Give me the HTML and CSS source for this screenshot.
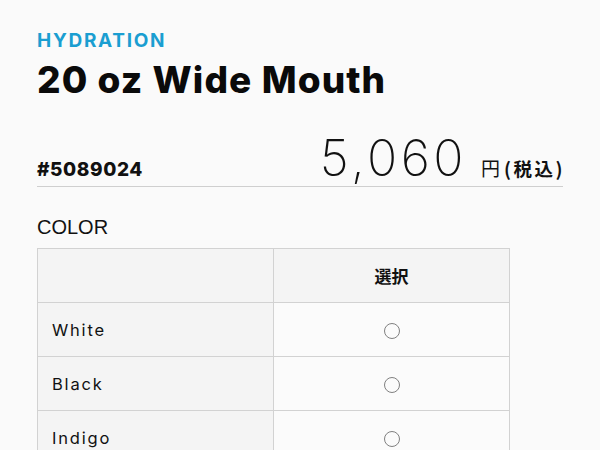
FILE: index.html
```html
<!DOCTYPE html>
<html lang="ja">
<head>
<meta charset="utf-8">
<link rel="stylesheet" href="styles.css">
</head>
<body>
<main class="product">
  <p class="category">HYDRATION</p>
  <h1 class="title">20 oz Wide Mouth</h1>
  <div class="price-row">
    <span class="sku">#5089024</span>
    <span class="price"><span class="amount">5,060</span><span class="yen">円</span><span class="tax">(税込)</span></span>
  </div>
  <h2 class="section">COLOR</h2>
  <table class="options">
    <colgroup><col class="col-label"><col class="col-choice"></colgroup>
    <thead>
      <tr><th class="label-cell"></th><th class="choice-head">選択</th></tr>
    </thead>
    <tbody>
      <tr><td class="label-cell">White</td><td class="choice"><span class="radio"></span></td></tr>
      <tr><td class="label-cell">Black</td><td class="choice"><span class="radio"></span></td></tr>
      <tr><td class="label-cell">Indigo</td><td class="choice"><span class="radio"></span></td></tr>
    </tbody>
  </table>
</main>
</body>
</html>
```
FILE: styles.css
```css
html, body {
  margin: 0;
  padding: 0;
  background: #fafafa;
}
body {
  font-family: "Inter", "Noto Sans CJK JP", sans-serif;
  color: #111;
}
.product {
  padding: 30px 37px 0 37px;
}
.category {
  margin: 0;
  font-size: 19px;
  font-weight: 700;
  letter-spacing: 1.7px;
  color: #1a9ed1;
  line-height: 22px;
}
.title {
  margin: 6px 0 0 0;
  font-size: 37px;
  font-weight: 800;
  letter-spacing: 1.1px;
  line-height: 44px;
  color: #0a0a0a;
}
.price-row {
  display: flex;
  justify-content: space-between;
  align-items: baseline;
  border-bottom: 1px solid #cfcfcf;
  margin-top: 36px;
  padding-bottom: 5px;
}
.sku {
  font-size: 19px;
  font-weight: 800;
  letter-spacing: 0.6px;
}
.price {
  white-space: nowrap;
  flex-shrink: 0;
  margin-right: 0;
}
.amount {
  font-size: 50px;
  font-weight: 200;
  letter-spacing: 3.5px;
  line-height: 40px;
  margin-right: 14px;
}
.yen {
  font-size: 19px;
  font-weight: 400;
  font-family: "Noto Sans CJK JP", sans-serif;
  margin-right: 4px;
}
.tax {
  font-size: 18.5px;
  font-weight: 700;
  font-family: "Noto Sans CJK JP", sans-serif;
  letter-spacing: 2.5px;
  margin-right: -2px;
}
.section {
  margin: 28px 0 9px 0;
  font-family: "Liberation Sans", Arial, sans-serif;
  font-size: 20px;
  font-weight: 400;
  line-height: 24px;
}
.options {
  border-collapse: collapse;
  table-layout: fixed;
  width: 473px;
}
.col-label, .col-choice {
  width: 236px;
}
.options th, .options td {
  border: 1px solid #d2d2d2;
  height: 53px;
  padding: 0;
}
.label-cell {
  background: #f4f4f4;
  padding-left: 14px !important;
  font-size: 16.5px;
  letter-spacing: 1.8px;
  text-align: left;
  font-weight: 400;
}
.choice-head {
  background: #f4f4f4;
  font-size: 17px;
  font-weight: 700;
  font-family: "Noto Sans CJK JP", sans-serif;
  text-align: center;
}
.choice {
  background: #fbfbfb;
  text-align: center;
}
.radio {
  display: inline-block;
  width: 14px;
  height: 14px;
  border: 1px solid #808080;
  border-radius: 50%;
  vertical-align: middle;
}
```
